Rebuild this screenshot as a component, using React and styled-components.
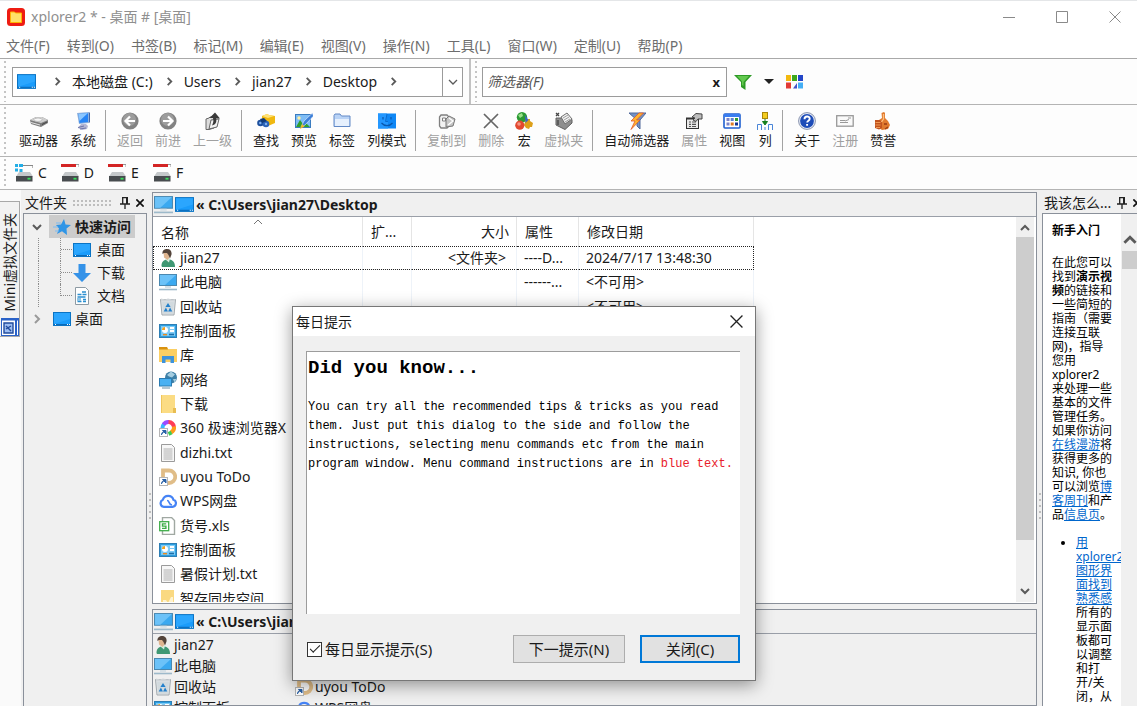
import React from "react";
import styled, { createGlobalStyle, css } from "styled-components";

const Global = createGlobalStyle`
  *, *::before, *::after { box-sizing: border-box; }
  html, body, #root { height: 100%; }
  body {
    margin: 0;
    overflow: hidden;
    background: #f0f0f0;
    color: #1a1a1a;
    font-family: "Noto Sans", "Noto Sans CJK SC", sans-serif;
    font-size: 14px;
    line-height: 20px;
  }
  button, input {
    font: inherit;
    color: inherit;
    margin: 0;
    padding: 0;
    border: 0;
    border-radius: 0;
    background: none;
  }
  svg { display: block; flex: none; }
`;

/* ---------- icons ---------- */

const Svg = ({ size = 18, children }) => (
  <svg width={size} height={size} viewBox="0 0 18 18" aria-hidden="true">{children}</svg>
);

const art = {
  desktop: (
    <>
      <rect x="0.5" y="2.5" width="17" height="13" fill="#1a9cfb" stroke="#0b74c4" />
      <path d="M1 3h16v6L1 14z" fill="#33abff" opacity=".7" />
      <path d="M1 14.5h16" stroke="#0a6ab8" />
      <path d="M2 14.5h1M14 14.5h1M16 14.5h1" stroke="#fff" />
    </>
  ),
  pc: (
    <>
      <rect x="0.5" y="1.5" width="17" height="11" fill="#3ba9f0" stroke="#4a88b0" />
      <path d="M1 2h16L6 12H1z" fill="#6cc2f8" />
      <path d="M6 13h6v2H6z" fill="#d6e0e6" />
      <path d="M0 16.500h18" stroke="#9db9ca" strokeWidth="1.6" />
    </>
  ),
  user: (
    <>
      <path d="M2.500 17c0-4 2-6 5-6.500h3c3.500.5 5.500 3 5.500 7.500H5c-1.500 0-2.500 0-2.500-1z" fill="#3f9873" />
      <path d="M6.500 10.500l3.500 3 1-4-2-1z" fill="#d8ecdf" />
      <path d="M4.500 3h6v5.500L8.500 11 5 8.500z" fill="#dfb58f" />
      <path d="M3.500 5C3 1.500 5.500 0 8 0c3.500 0 5 2.500 4.500 5.500L11 9.500 9.500 6 8 4H5z" fill="#54443a" />
    </>
  ),
  bin: (
    <>
      <path d="M1.500 1.500h15l-1.500 15.500H3z" fill="#e3e7ea" stroke="#a2a9ae" />
      <path d="M2 0.500l4 1 3-1 4 1 3-.5v2.500H2z" fill="#d0d5d9" />
      <path d="M3 4h12l-1 12H4z" fill="#d2dade" />
      <path d="M9 5l2.600 4H6.400zM4.700 13.500l2.200-4 2 4zM13.300 13.500l-2.200-4-2 4z" fill="#2480cc" />
    </>
  ),
  control: (
    <>
      <rect x="0.500" y="2.500" width="17" height="13" fill="#7ecaf5" stroke="#2e7fb5" />
      <rect x="1.500" y="3.500" width="15" height="11" fill="none" stroke="#2c9ee0" />
      <circle cx="6" cy="8" r="3" fill="#fff" />
      <path d="M6 8V5a3 3 0 0 0-3 3z" fill="#f0a020" />
      <path d="M11 6h4M11 9h4" stroke="#fff" strokeWidth="1.800" />
      <path d="M4 12.700h4" stroke="#e98a1c" strokeWidth="1.400" />
      <path d="M10 12.500h5" stroke="#1d6ea8" strokeWidth="1.600" />
    </>
  ),
  library: (
    <>
      <path d="M0 1h8l1 2h9v13H0z" fill="#fbcf63" />
      <path d="M0 1h8l1 2.500H0z" fill="#d9920f" />
      <path d="M3 17v-7h12v7h-3.500v-3.500h-5V17z" fill="#3d93dc" />
    </>
  ),
  network: (
    <>
      <circle cx="12" cy="6.500" r="6" fill="#3d7fa6" />
      <path d="M8 4l4-3.500 4 3-3 3-3-1zM14 8l3.500 0-2 3.500z" fill="#a5cde0" />
      <rect x="0.500" y="7.500" width="12" height="7.500" fill="#49b1f2" stroke="#2b7cb2" />
      <path d="M3 17h8" stroke="#9ab4c3" strokeWidth="1.500" />
    </>
  ),
  folder: (
    <>
      <path d="M2 0h14v18H2z" fill="#fbdc84" />
      <path d="M14 13h3v5h-3z" fill="#e8bd52" />
      <path d="M2.500 0v18" stroke="#efc65c" />
    </>
  ),
  folderNote: (
    <>
      <path d="M2 0h13v18H2z" fill="#fad981" />
      <path d="M4 10h3l2 3 3-6h2v11H4z" fill="#fff3cf" />
    </>
  ),
  browser: (
    <>
      <path d="M3.500 9a5.500 5.500 0 0 1 1.500-4" fill="none" stroke="#35b8ff" strokeWidth="4" />
      <path d="M4.500 5.500A6 6 0 0 1 10 3" fill="none" stroke="#9a4cff" strokeWidth="4" />
      <path d="M9.500 3a6 6 0 0 1 5.500 5" fill="none" stroke="#ff3d57" strokeWidth="4" />
      <path d="M15 7.500a6 6 0 0 1-3 6" fill="none" stroke="#ff9b1a" strokeWidth="4" />
      <path d="M12.500 13.500l-3 1.500" fill="none" stroke="#3ecb53" strokeWidth="4" />
    </>
  ),
  todo: <path d="M4 2.500h6a6 6 0 0 1 0 12.500H4z" fill="#fff" stroke="#e0bd88" strokeWidth="3.800" />,
  text: (
    <>
      <path d="M2.500 0.500h10l3 3v14h-13z" fill="#f7f7f7" stroke="#9b9b9b" />
      <path d="M4.500 5h9M4.500 7h9M4.500 9h9M4.500 11h9M4.500 13h9M4.500 15h9" stroke="#b0b0b0" />
    </>
  ),
  cloud: (
    <>
      <path d="M5 14.800h8.500a3.600 3.600 0 0 0 1-7A5.600 5.600 0 0 0 3.800 7.800 3.700 3.700 0 0 0 4.500 14.800z" fill="none" stroke="#4583f5" strokeWidth="2.200" />
      <path d="M8 8.500c3 0 1 4 5 4.500" fill="none" stroke="#4583f5" strokeWidth="1.600" />
    </>
  ),
  sheet: (
    <>
      <path d="M3.500 0.500h9l3 3v14h-12z" fill="#fff" stroke="#a0a8a2" strokeWidth="1.400" />
      <rect x="0.700" y="4.700" width="9" height="9" fill="#fff" stroke="#3fae49" strokeWidth="1.300" />
      <path d="M7.200 6.900H3.500v2.200H6.900v2.300H3" fill="none" stroke="#3fae49" strokeWidth="1.400" />
    </>
  ),
  star: (
    <>
      <path d="M11 1l1.500 5.500 5.500.5-4.500 3.500L14 17l-5-3.800L4 16l2-5.500L3 7l5-.5z" fill="#2f95e6" />
      <path d="M3 5h5M0 9h5M2 13h4" stroke="#7cbcf2" />
    </>
  ),
  down: <path d="M5.500 0h7v9H18l-9 9-9-9h5.500z" fill="#3492e8" />,
  docs: (
    <>
      <path d="M2.500 0.500h10l3 3v14h-13z" fill="#fff" stroke="#8d9aa3" />
      <path d="M9 5h4M4.500 7.500h4M9.500 7.500h4M4.500 10h8M4.500 14.500h4M10 12.500h3M10 14.500h3" stroke="#2b8fd0" strokeWidth="1.300" />
      <path d="M4 11h4v3H4z" fill="#8fc4e6" />
    </>
  ),
  drive: (
    <>
      <path d="M0 8l6-3 6 0 6 3v3l-7 4L1 12z" fill="#7d7d7d" />
      <path d="M0 8l6-3h6l6 3-7 3z" fill="#cfcfcf" />
      <ellipse cx="8" cy="7.700" rx="4" ry="1.700" fill="#f6f6f6" stroke="#a5a5a5" strokeWidth=".6" />
      <path d="M1 10.500l9 2.500" stroke="#e2e2e2" />
      <path d="M12 12.500l5-2.500" stroke="#444" />
    </>
  ),
  system: (
    <>
      <path d="M3 1l12-1v11l-10 1z" fill="#8fb0dc" />
      <path d="M4.500 2l9.500-1v9l-8.500 1z" fill="#2684f5" />
      <path d="M4.500 2l9.500-1-8.500 8z" fill="#8ac6ff" />
      <path d="M15 0l1 1v9l-1 1z" fill="#4367a8" />
      <path d="M7 12h5l2 2-1 3-5 1-4-2z" fill="#b3b6d4" />
      <path d="M4 15.500l6-1.500M6 17l6-1" stroke="#6d74a8" />
    </>
  ),
  back: (
    <>
      <circle cx="9" cy="9" r="8.600" fill="#828282" />
      <circle cx="8.500" cy="7.500" r="6.500" fill="#9c9c9c" />
      <path d="M14 9H5M9 4.500L4.500 9 9 13.500" fill="none" stroke="#fff" strokeWidth="2.200" />
    </>
  ),
  forward: (
    <>
      <circle cx="9" cy="9" r="8.600" fill="#828282" />
      <circle cx="8.500" cy="7.500" r="6.500" fill="#9c9c9c" />
      <path d="M4 9h9M9 4.500L13.500 9 9 13.500" fill="none" stroke="#fff" strokeWidth="2.200" />
    </>
  ),
  up: (
    <>
      <path d="M2 7l3-1 1-1h4v11l-5 1.500H2z" fill="#dcdcdc" stroke="#666" />
      <path d="M5 17l2-9 8-1-2 8z" fill="#f3f3f3" stroke="#666" />
      <path d="M8 13.500c4-1 5-4 4-7h4L11 .5 5.500 6H9c1 3 0 5-1 7.500z" fill="#3a3a3a" />
    </>
  ),
  find: (
    <>
      <path d="M5 4l5-2 2 1 6 1v7l-7 3-6-3z" fill="#f0b810" />
      <path d="M5 4l5-2 2 1 5 1-6 2z" fill="#ffe277" />
      <circle cx="3.500" cy="11" r="3.300" fill="#1d4f9c" />
      <circle cx="9" cy="12" r="3.300" fill="#2b62b5" />
      <path d="M3 7l4-1 3 3-5 2z" fill="#123a75" />
      <circle cx="3.300" cy="11" r="1.200" fill="#7fb1ee" />
      <circle cx="9" cy="12" r="1.200" fill="#7fb1ee" />
    </>
  ),
  preview: (
    <>
      <rect x="0.500" y="2.500" width="15" height="13" fill="#7dbcf5" stroke="#3a7cc0" />
      <path d="M1 15l4-7 3 4 2-2 5 5z" fill="#2fa02c" />
      <circle cx="4" cy="6" r="1.700" fill="#fff0a0" />
      <path d="M17.500 1L9 9l-3 6 4-2 8.500-9z" fill="#3c7fd8" stroke="#e8eefc" strokeWidth=".6" />
      <path d="M5 17l2-5 2.500 2.500z" fill="#f0b428" />
    </>
  ),
  tabFolder: (
    <>
      <path d="M1 14.500V3.500L2 2h5l1.500 2H17v10.500z" fill="#b9d3f6" stroke="#6289c6" />
      <path d="M2 7h14v7H2z" fill="#e6f0fd" />
    </>
  ),
  face: (
    <>
      <rect x="0" y="1.500" width="18" height="15" fill="#0f87f5" />
      <path d="M0 1.500h9L8 10h2v6.500H0z" fill="#2397ff" />
      <path d="M5 5v2.500M13 5v2.500M3.500 11c3 3.500 8 3.500 11 0" stroke="#0a57ac" strokeWidth="1.200" fill="none" />
      <path d="M9 2L7.500 9.500H10" stroke="#0a6cd0" fill="none" />
    </>
  ),
  copy: (
    <>
      <path d="M1.500 5l1.500-2h6l2 2v9l-2 2H3l-1.500-2z" fill="#f2f2f2" stroke="#808080" strokeWidth="1.300" />
      <path d="M4.500 6h3v3h-3z" fill="#fff" stroke="#808080" />
      <path d="M8 7l3-3 6 3-2 7-7 1z" fill="#c6c6c6" stroke="#777" />
      <path d="M11 6l4 3-5 4" fill="none" stroke="#fff" strokeWidth="1.300" />
    </>
  ),
  cross: <path d="M2 2l14 14M16 2L2 16" stroke="#666" strokeWidth="1.700" />,
  macro: (
    <>
      <circle cx="7" cy="5.200" r="5.200" fill="#2b9a33" />
      <path d="M3 3l4-2 1 3-3 2z" fill="#9be08a" />
      <path d="M11 7l4 0 0 2 3 2-1 4-2 0-1 2-3-1-2-3z" fill="#dda01a" />
      <path d="M10 3l3.500 5-3 3z" fill="#3d66c4" />
      <circle cx="4.800" cy="13.200" r="4.600" fill="#e2492f" />
      <circle cx="4" cy="12" r="1.800" fill="#f59384" />
    </>
  ),
  virtual: (
    <>
      <path d="M1 6l5 0 11 1.500 0 3.500-7 6.500L1 13z" fill="#8f8f8f" stroke="#606060" />
      <path d="M6 5l6-4 5 6-7 5z" fill="#f0f0f0" stroke="#707070" />
      <path d="M8 6l5-3M9 8l5-3M10 10l5-3" stroke="#a0a0a0" />
      <path d="M1 4l3-3M4 4L1 1M3 8v5" stroke="#444" strokeWidth="1.300" />
    </>
  ),
  autoFilter: (
    <>
      <path d="M1 1h17l-6 7v9l-3-3V8z" fill="#7392c4" stroke="#50689a" />
      <path d="M11 1L3 9h4l-4 8.500L12 8H8.500l7-7z" fill="#ffb62e" stroke="#e2552b" strokeWidth=".8" />
    </>
  ),
  props: (
    <>
      <rect x="1.500" y="6.500" width="12" height="10" fill="#e9e9e9" stroke="#333" />
      <path d="M1 6.500h10" stroke="#333" strokeWidth="2" />
      <path d="M4 10h2M7 10h4M4 12.300h2M7 12.300h4M4 14.500h2M7 14.500h4" stroke="#555" strokeWidth="1.200" />
      <path d="M7 5l4-3.500 6 .5v5h-4l-2 2.500-3-1.500 2-2z" fill="#bdbdbd" stroke="#444" />
    </>
  ),
  view: (
    <>
      <rect x="1" y="2" width="16" height="14" rx="1" fill="#fff" stroke="#1f5fd0" strokeWidth="1.600" />
      <path d="M1 3.500h16" stroke="#3a7df0" strokeWidth="3" />
      <path d="M3.500 7.500h3M3.500 12h3" stroke="#7b83c8" strokeWidth="3" />
      <path d="M7.700 7.500h3" stroke="#5b7fd0" strokeWidth="3" />
      <path d="M7.700 12h3" stroke="#dd7a22" strokeWidth="3" />
      <path d="M12 7.500h3" stroke="#2e9a35" strokeWidth="3" />
      <path d="M12 12h3" stroke="#15358f" strokeWidth="3" />
    </>
  ),
  columns: (
    <>
      <rect x="6.500" y="0.500" width="5" height="6" fill="#f3cc1f" stroke="#a98709" />
      <path d="M9 7v4M6.500 9.500L9 13l2.500-3.500z" stroke="#16801c" fill="#16801c" />
      <path d="M1.500 18v-5.500h4V18M9 18v-3M12.500 18v-5.500h4V18" stroke="#4a86d8" fill="none" />
    </>
  ),
  help: (
    <>
      <circle cx="9" cy="9" r="8.400" fill="#e9eef8" stroke="#8792ad" />
      <circle cx="9" cy="9" r="6.900" fill="#1d4cb8" />
      <path d="M6.500 7.200c0-3.600 5.200-3.400 5.200-.4 0 1.900-2.500 1.900-2.500 3.700M9.100 12v1.800" fill="none" stroke="#fff" strokeWidth="1.900" />
    </>
  ),
  card: (
    <>
      <rect x="0.700" y="3.700" width="16.500" height="10.500" fill="#fafafa" stroke="#999" strokeWidth="1.300" />
      <path d="M4 8.500h5M4 10.500h8M9 9l4-1.500M12 6h3" stroke="#999" />
    </>
  ),
  thumb: (
    <>
      <path d="M7.500 1L10 0l1 1v5l3 3 2 4-2 4-6 1-3-2V8l3-2z" fill="#e07a2e" />
      <path d="M1 8h5l2 2v6l-3 1.500L1 16z" fill="#c2541f" />
      <path d="M1.500 10.500h5M1.500 13h5M2 15.500h4" stroke="#f09a55" strokeWidth="1.200" />
      <path d="M9.500 2v5l-2 3" stroke="#ffbf80" fill="none" strokeWidth="1.300" />
      <path d="M10 12h3M14 15l-3 2" stroke="#9b3d14" fill="none" strokeWidth="1.300" />
    </>
  ),
  funnel: (
    <>
      <path d="M0 2h18l-6.500 7v8L7 14V9z" fill="#2e9b26" />
      <path d="M3 3h12L9.500 9v4L8 12V8.500z" fill="#63c94f" />
    </>
  ),
  palette: (
    <>
      <path d="M0 2h5v6H0z" fill="#f3b90f" />
      <path d="M6 2h5v6H6z" fill="#3ea91c" />
      <path d="M12 2h5v6h-5z" fill="#2446c8" />
      <path d="M0 9.500h5v6H0z" fill="#e23b35" />
      <path d="M11 10v5.500H7z" fill="#4554c9" />
      <path d="M12 9.500h5v6h-5z" fill="#43aef5" />
    </>
  ),
  diskC: (
    <>
      <path d="M8 1.500h10V4" fill="none" stroke="#888" strokeWidth="1.200" />
      <path d="M0 0h3v3H0zM4 0h4v3H4zM0 4.500h3v3H0zM4.500 5h3v3h-3z" fill="#23aee6" />
      <path d="M4 8h11l3 4.500H1z" fill="#c4c8ca" />
      <rect x="1" y="12" width="16.500" height="5.500" fill="#484c4f" />
      <path d="M12.500 14.700h3" stroke="#37e05a" strokeWidth="1.800" />
    </>
  ),
  disk: (
    <>
      <path d="M0 1.500h15" stroke="#d32424" strokeWidth="3" />
      <path d="M15 .500h3V3" fill="none" stroke="#999" />
      <path d="M4 8h11l3 4.500H1z" fill="#c4c8ca" />
      <rect x="1" y="12" width="16.500" height="5.500" fill="#484c4f" />
      <path d="M12.500 14.700h3" stroke="#37e05a" strokeWidth="1.800" />
    </>
  ),
  app: (
    <>
      <rect width="18" height="18" rx="3.500" fill="#ee1c12" />
      <path d="M3.500 4h4l1 1h6v9.500h-11z" fill="#ffe169" stroke="#ffb400" />
    </>
  ),
  mini: (
    <>
      <rect x="0.500" y="0.500" width="17" height="17" fill="#fff" stroke="#2a62c8" />
      <path d="M1 1.500h16M15 1v16" stroke="#2a62c8" strokeWidth="2" />
      <path d="M3 5h9v10H3z" fill="#9dbdf2" stroke="#214b9c" strokeWidth="1.400" />
      <path d="M5 8l5 5M10 8l-5 3" stroke="#214b9c" strokeWidth="1.400" />
    </>
  ),
};

const shortcut = (
  <>
    <rect x="0.500" y="9.500" width="8" height="8" fill="#fff" stroke="#b5b5b5" />
    <path d="M2.500 16c0-2 1-3.500 3-3.500M3.500 11.500h3.500V15z" fill="#2a62a8" stroke="#2a62a8" />
  </>
);

const Icon = ({ name, size, link }) => (
  <Svg size={size}>
    {art[name]}
    {link && shortcut}
  </Svg>
);

const Chevron = ({ dir = "right", size = 10, color = "#5a5a5a", weight = 2 }) => {
  const d = { right: "M3 1l4 4-4 4", down: "M1 3l4 4 4-4", up: "M1 7l4-4 4 4" }[dir];
  return (
    <svg width={size} height={size} viewBox="0 0 10 10" aria-hidden="true">
      <path d={d} fill="none" stroke={color} strokeWidth={weight} />
    </svg>
  );
};

const CloseMark = ({ size = 12, color = "#8a8a8a", weight = 1 }) => (
  <svg width={size} height={size} viewBox="0 0 12 12" aria-hidden="true">
    <path d="M.5.5l11 11M11.500.5l-11 11" stroke={color} strokeWidth={weight} />
  </svg>
);

const PinMark = () => (
  <svg width="12" height="12" viewBox="0 0 12 12" aria-hidden="true">
    <path d="M3 .7h6M3.700 1v6M1 7h10M6 7v5" stroke="#222" strokeWidth="1.300" />
    <path d="M8 1v6" stroke="#222" strokeWidth="2" />
  </svg>
);

/* ---------- window frame ---------- */

const Window = styled.div`
  height: 100vh;
  display: flex;
  flex-direction: column;
  overflow: hidden;
`;

const TitleBar = styled.header`
  display: flex;
  align-items: center;
  height: 33px;
  flex: none;
  padding-left: 7px;
  gap: 6px;
  background: #fff;
  border-top: 1px solid #e4e6e8;
  color: #8f8f8f;
`;

const WindowTitle = styled.h1`
  flex: 1;
  margin: 0;
  font-size: 14px;
  font-weight: 400;
`;

const WindowButtons = styled.div`
  display: flex;
  gap: 9px;
`;

const WindowButton = styled.button`
  width: 44px;
  height: 30px;
  display: grid;
  place-items: center;
`;

const MenuBar = styled.nav`
  display: flex;
  align-items: center;
  gap: 17px;
  height: 26px;
  flex: none;
  padding-left: 6px;
  background: #fff;
  border-bottom: 1px solid #a9a9a9;
  color: #6d6d6d;
  white-space: nowrap;
`;

const Band = styled.div`
  display: flex;
  align-items: center;
  height: ${(p) => p.$height};
  flex: none;
  background: #fdfdfd;
  border-bottom: 1px solid #b4b4b4;
`;

const Grip = styled.div`
  width: 2px;
  align-self: stretch;
  flex: none;
  margin: 2px 0 2px 4px;
  background: repeating-linear-gradient(#c4c4c4 0 2px, transparent 2px 5px);
`;

const AddressGroup = styled.div`
  display: flex;
  align-items: center;
  width: 471px;
  align-self: stretch;
  padding-right: 6px;
  border-right: 2px solid #c2c2c2;
`;

const AddressBox = styled.div`
  display: flex;
  align-items: center;
  flex: 1;
  height: 30px;
  margin-left: 6px;
  padding-left: 4px;
  background: #fff;
  border: 1px solid #9b9b9b;
`;

const Crumbs = styled.nav`
  display: flex;
  align-items: center;
  gap: 10px;
  flex: 1;
  white-space: nowrap;
  & > svg { margin-left: 2px; }
  & > svg:first-child { margin: 0 5px 0 0; }
`;

const DropButton = styled.button`
  width: 20px;
  align-self: stretch;
  display: grid;
  place-items: center;
  border-left: 1px solid #9b9b9b;
`;

const FilterBox = styled.div`
  display: flex;
  align-items: center;
  width: 245px;
  height: 30px;
  margin: 0 7px 0 5px;
  padding: 0 6px 0 4px;
  background: #fff;
  border: 1px solid #9b9b9b;
`;

const FilterInput = styled.input`
  flex: 1;
  min-width: 0;
  outline: 0;
  font-style: italic;
  &::placeholder { color: #555; opacity: 1; }
`;

const ClearButton = styled.button`
  font-size: 13px;
  font-weight: 700;
  line-height: 16px;
`;

const FlatButton = styled.button`
  display: flex;
  align-items: center;
`;

const FilterTools = styled.div`
  display: flex;
  align-items: center;
  gap: 12px;
`;

const ToolRow = styled.div`
  display: flex;
  align-items: center;
  padding-left: 7px;
`;

const ToolButton = styled.button`
  display: flex;
  flex-direction: column;
  align-items: center;
  gap: 1px;
  min-width: 28px;
  padding: 0 6px;
  font-size: 13px;
  line-height: 18px;
  white-space: nowrap;
  color: #1a1a1a;
  &:disabled { color: #a0a0a0; }
`;

const ToolIcon = styled.span`
  display: flex;
  justify-content: center;
  width: 16px;
`;

const ToolRule = styled.span`
  width: 1px;
  height: 41px;
  margin: 0 5px 0 3px;
  background: #a3a3a3;
`;

const Drives = styled.div`
  display: flex;
  gap: 14px;
  margin-left: 9px;
`;

const DriveButton = styled.button`
  display: flex;
  align-items: center;
  gap: 5px;
`;

/* ---------- workspace ---------- */

const Workspace = styled.main`
  flex: 1;
  min-height: 0;
  display: grid;
  grid-template-columns: 21px 126px 5px minmax(0, 1fr) 5px 95px;
  grid-template-rows: minmax(0, 1fr);
`;

const SideStrip = styled.aside`
  background: #fafafa;
  padding-top: 11px;
`;

const SideTab = styled.button`
  display: flex;
  flex-direction: column;
  justify-content: flex-end;
  align-items: center;
  gap: 6px;
  width: 20px;
  height: 136px;
  border: 1px solid #a8a8a8;
  border-left: 0;
  background: #f2f2f2;
`;

const SideLabel = styled.span`
  writing-mode: vertical-rl;
  text-orientation: sideways;
  transform: rotate(180deg);
  white-space: nowrap;
  line-height: 18px;
`;

const Dock = styled.section`
  display: flex;
  flex-direction: column;
  min-width: 0;
  min-height: 0;
  padding-left: ${(p) => p.$inset || "0"};
  overflow: hidden;
`;

const DockHead = styled.div`
  display: flex;
  align-items: center;
  gap: 5px;
  height: 23px;
  flex: none;
  padding: 3px 3px 0 2px;
  white-space: nowrap;
`;

const DockTitle = styled.h2`
  margin: 0;
  font-size: 14px;
  font-weight: 400;
`;

const DockDots = styled.span`
  flex: 1;
  height: 8px;
  margin-right: 2px;
  background: radial-gradient(circle, #bdbdbd 1px, transparent 1px) 0 0 / 4px 4px;
`;

const Splitter = styled.div`
  display: flex;
  align-items: flex-start;
  justify-content: center;
  padding-top: 303px;
  &::before {
    content: "";
    width: 2px;
    height: 26px;
    background: repeating-linear-gradient(#bdbdbd 0 2px, transparent 2px 6px);
  }
`;

const Tree = styled.ul`
  flex: 1;
  margin: 0;
  padding: 1px 0 0;
  list-style: none;
  border: 1px solid #8a909a;
  border-bottom: 0;
`;

const TreeRow = styled.li`
  display: flex;
  align-items: center;
  height: 23px;
`;

const Toggle = styled.button`
  width: 25px;
  display: grid;
  place-items: center;
`;

const TreeLabel = styled.span`
  display: flex;
  align-items: center;
  gap: ${(p) => (p.$child ? "6px" : "4px")};
  height: 23px;
  padding: 0 4px 0 ${(p) => (p.$child ? "1px" : "4px")};
  white-space: nowrap;
  ${(p) => p.$selected && css`
    background: #cccccc;
    font-weight: 700;
  `}
`;

const Guide = styled.span`
  width: ${(p) => p.$width};
  height: ${(p) => (p.$end ? "50%" : "100%")};
  align-self: flex-start;
  border-right: 1px dotted #8c8c8c;
`;

const Dash = styled.span`
  width: 11px;
  border-bottom: 1px dotted #8c8c8c;
`;

const Center = styled.div`
  display: grid;
  grid-template-rows: minmax(0, 1fr) 97px;
  gap: 5px;
  padding-top: 2px;
  min-height: 0;
`;

const Pane = styled.section`
  display: flex;
  flex-direction: column;
  min-height: 0;
  border: 1px solid #8a909a;
  background: ${(p) => (p.$active ? "#fff" : "#f0f0f0")};
  overflow: hidden;
`;

const PaneHead = styled.header`
  display: flex;
  align-items: center;
  gap: 2px;
  height: 24px;
  flex: none;
  padding-left: 1px;
  background: #f0f0f0;
  border-bottom: 1px solid #9a9fa8;
  white-space: nowrap;
`;

const PanePath = styled.h2`
  margin: 0;
  font-size: 14px;
  font-weight: 700;
`;

const PaneBody = styled.div`
  flex: 1;
  min-height: 0;
  display: flex;
  padding: 0 2px 1px 0;
`;

const ListView = styled.div`
  flex: 1;
  min-width: 0;
  overflow: hidden;
`;

const FileTable = styled.table`
  width: 601px;
  table-layout: fixed;
  border-collapse: separate;
  border-spacing: 0;
  white-space: nowrap;
`;

const HeadCell = styled.th`
  height: 29px;
  padding: 0 7px 0 8px;
  border-right: 1px solid #e5e5e5;
  font-weight: 400;
  text-align: ${(p) => (p.$right ? "right" : "left")};
`;

const SortHead = styled.span`
  display: flex;
  flex-direction: column;
  & > svg {
    align-self: center;
    margin: -4px 0 -4px 0;
  }
`;

const Row = styled.tr`
  height: 24px;
  &:nth-child(3n) { height: 25px; }
`;

const focusEdge = css`
  border-top: 1px dotted #222;
  border-bottom: 1px dotted #222;
  &:first-child { border-left: 1px dotted #222; }
  &:last-child { border-right: 1px dotted #222; }
`;

const Cell = styled.td`
  padding: 0 ${(p) => (p.$right ? "10px" : "0")} 0 ${(p) => (p.$name ? "5px" : "7px")};
  border-right: 1px solid #eef3f9;
  text-align: ${(p) => (p.$right ? "right" : "left")};
  line-height: 20px;
  &:first-child { border-left: 1px solid transparent; }
  ${(p) => p.$focus && focusEdge}
`;

const FileName = styled.span`
  display: flex;
  align-items: center;
  gap: 3px;
`;

const ScrollTrack = styled.div`
  display: flex;
  flex-direction: column;
  align-items: center;
  width: ${(p) => p.$width};
  flex: none;
  padding: ${(p) => p.$pad};
  gap: 4px;
  background: #f0f0f0;
`;

const ScrollThumb = styled.div`
  align-self: stretch;
  flex: 0 0 ${(p) => p.$length};
  margin-bottom: auto;
  background: #cdcdcd;
`;

const CompactList = styled.ul`
  display: grid;
  grid-template-columns: 141px 141px;
  grid-auto-rows: 21px;
  margin: 0;
  padding: 0 0 0 1px;
  list-style: none;
`;

const CompactItem = styled.li`
  display: flex;
  align-items: center;
  gap: 2px;
  grid-column: ${(p) => p.$column};
  grid-row: ${(p) => p.$row};
  white-space: nowrap;
`;

/* ---------- help dock ---------- */

const HelpFrame = styled.div`
  flex: 1;
  min-height: 0;
  display: flex;
  background: #fff;
  border-top: 1px solid #8a909a;
  border-left: 1px solid #8a909a;
`;

const HelpText = styled.article`
  flex: 1;
  min-width: 0;
  overflow: hidden;
  padding: 10px 0 0 9px;
  font-size: 12px;
  line-height: 14px;
  color: #000;
  white-space: nowrap;
  h3 { margin: 0 0 18px; font-size: 12px; }
  p { margin: 0 0 14px; }
  ul { margin: 0; padding-left: 24px; }
  a { color: #0066cc; text-decoration: underline; }
`;

/* ---------- tip dialog ---------- */

const Dialog = styled.section`
  position: absolute;
  left: 292px;
  top: 306px;
  width: 464px;
  background: #f0f0f0;
  border: 1px solid #777;
  box-shadow: 0 4px 16px rgba(0, 0, 0, 0.4);
`;

const DialogHead = styled.header`
  display: flex;
  align-items: center;
  justify-content: space-between;
  height: 29px;
  padding: 0 12px 0 3px;
  background: #fff;
`;

const DialogTitle = styled.h2`
  margin: 0;
  font-size: 14px;
  font-weight: 400;
`;

const TipBox = styled.div`
  height: 263px;
  margin: 15px 15px 0 13px;
  padding: 4px 0 0 1px;
  background: #fff;
  border-top: 1px solid #9c9c9c;
  border-left: 1px solid #9c9c9c;
  color: #000;
  font: 12px/19px "Liberation Mono", monospace;
  white-space: nowrap;
  h3 { margin: 0 0 18px; font-size: 19px; line-height: 24px; }
  p { margin: 0; }
  em { font-style: normal; color: #e8202c; }
`;

const DialogFoot = styled.footer`
  display: flex;
  align-items: center;
  gap: 15px;
  padding: 21px 15px 17px 14px;
  font-size: 15px;
`;

const CheckLabel = styled.label`
  display: flex;
  align-items: center;
  gap: 3px;
  margin-right: auto;
`;

const CheckBox = styled.input`
  appearance: none;
  width: 15px;
  height: 15px;
  border: 1px solid #333;
  background: #fff;
  display: grid;
  place-items: center;
  &:checked::before {
    content: "";
    width: 10px;
    height: 5px;
    margin-bottom: 3px;
    border-left: 1px solid #222;
    border-bottom: 1px solid #222;
    transform: rotate(-45deg);
  }
`;

const DialogButton = styled.button`
  width: ${(p) => (p.$primary ? "100px" : "112px")};
  height: 28px;
  background: #e1e1e1;
  border: ${(p) => (p.$primary ? "2px solid #0078d7" : "1px solid #adadad")};
`;

/* ---------- data ---------- */

const menus = ["文件(F)", "转到(O)", "书签(B)", "标记(M)", "编辑(E)", "视图(V)", "操作(N)", "工具(L)", "窗口(W)", "定制(U)", "帮助(P)"];
const crumbs = ["本地磁盘 (C:)", "Users", "jian27", "Desktop"];

const tools = [
  [["驱动器", "drive"], ["系统", "system"]],
  [["返回", "back", true], ["前进", "forward", true], ["上一级", "up", true]],
  [["查找", "find"], ["预览", "preview"], ["标签", "tabFolder"], ["列模式", "face"]],
  [["复制到", "copy", true], ["删除", "cross", true], ["宏", "macro"], ["虚拟夹", "virtual", true]],
  [["自动筛选器", "autoFilter"], ["属性", "props", true], ["视图", "view"], ["列", "columns"]],
  [["关于", "help"], ["注册", "card", true], ["赞誉", "thumb"]],
];

const files = [
  { name: "jian27", icon: "user", size: "<文件夹>", attr: "----D...", date: "2024/7/17 13:48:30" },
  { name: "此电脑", icon: "pc", attr: "------...", date: "<不可用>" },
  { name: "回收站", icon: "bin", date: "<不可用>" },
  { name: "控制面板", icon: "control" },
  { name: "库", icon: "library" },
  { name: "网络", icon: "network" },
  { name: "下载", icon: "folder" },
  { name: "360 极速浏览器X", icon: "browser", link: true },
  { name: "dizhi.txt", icon: "text" },
  { name: "uyou ToDo", icon: "todo", link: true },
  { name: "WPS网盘", icon: "cloud" },
  { name: "货号.xls", icon: "sheet" },
  { name: "控制面板", icon: "control" },
  { name: "暑假计划.txt", icon: "text" },
  { name: "智存同步空间", icon: "folderNote" },
];

const compact = [
  { name: "jian27", icon: "user", column: 1, row: 1 },
  { name: "此电脑", icon: "pc", column: 1, row: 2 },
  { name: "回收站", icon: "bin", column: 1, row: 3 },
  { name: "控制面板", icon: "control", column: 1, row: 4 },
  { name: "uyou ToDo", icon: "todo", link: true, column: 2, row: 3 },
  { name: "WPS网盘", icon: "cloud", column: 2, row: 4 },
];

const treeChildren = [
  ["桌面", "desktop"],
  ["下载", "down"],
  ["文档", "docs"],
];

/* ---------- parts ---------- */

const PaneTitle = () => (
  <PaneHead>
    <Icon name="pc" size={19} />
    <Icon name="desktop" size={19} />
    <PanePath>« C:\Users\jian27\Desktop</PanePath>
  </PaneHead>
);

const DockButtons = () => (
  <>
    <FlatButton aria-label="固定"><PinMark /></FlatButton>
    <FlatButton aria-label="关闭"><CloseMark size={8} color="#111" weight={2.5} /></FlatButton>
  </>
);

const FolderDock = () => (
  <Dock $inset="2px">
    <DockHead>
      <DockTitle>文件夹</DockTitle>
      <DockDots />
      <DockButtons />
    </DockHead>
    <Tree>
      <TreeRow>
        <Toggle aria-label="折叠"><Chevron dir="down" /></Toggle>
        <TreeLabel $selected><Icon name="star" />快速访问</TreeLabel>
      </TreeRow>
      {treeChildren.map(([name, icon], i) => (
        <TreeRow key={name}>
          <Guide $width="15px" />
          <Guide $width="22px" $end={i === treeChildren.length - 1} />
          <Dash />
          <TreeLabel $child><Icon name={icon} />{name}</TreeLabel>
        </TreeRow>
      ))}
      <TreeRow>
        <Toggle aria-label="展开"><Chevron color="#9a9a9a" /></Toggle>
        <TreeLabel><Icon name="desktop" />桌面</TreeLabel>
      </TreeRow>
    </Tree>
  </Dock>
);

const FilePane = () => (
  <Pane $active>
    <PaneTitle />
    <PaneBody>
      <ListView>
        <FileTable>
          <colgroup>
            <col width="210" /><col width="49" /><col width="105" /><col width="62" /><col width="175" />
          </colgroup>
          <thead>
            <tr>
              <HeadCell>
                <SortHead><Chevron dir="up" weight={1} color="#777" />名称</SortHead>
              </HeadCell>
              <HeadCell>扩...</HeadCell>
              <HeadCell $right>大小</HeadCell>
              <HeadCell>属性</HeadCell>
              <HeadCell>修改日期</HeadCell>
            </tr>
          </thead>
          <tbody>
            {files.map((f, i) => (
              <Row key={i}>
                <Cell $name $focus={i === 0}>
                  <FileName><Icon name={f.icon} link={f.link} />{f.name}</FileName>
                </Cell>
                <Cell $focus={i === 0} />
                <Cell $right $focus={i === 0}>{f.size}</Cell>
                <Cell $focus={i === 0}>{f.attr}</Cell>
                <Cell $focus={i === 0}>{f.date}</Cell>
              </Row>
            ))}
          </tbody>
        </FileTable>
      </ListView>
      <ScrollTrack $width="18px" $pad="6px 0">
        <Chevron dir="up" />
        <ScrollThumb $length="303px" />
        <Chevron dir="down" />
      </ScrollTrack>
    </PaneBody>
  </Pane>
);

const HelpDock = () => (
  <Dock>
    <DockHead>
      <DockTitle>我该怎么...</DockTitle>
      <DockButtons />
    </DockHead>
    <HelpFrame>
      <HelpText>
        <h3>新手入门</h3>
        <p>
          在此您可以<br />找到<b>演示视</b><br /><b>频</b>的链接和<br />一些简短的<br />指南（需要<br />
          连接互联<br />网)，指导<br />您用<br />xplorer2<br />来处理一些<br />基本的文件<br />管理任务。<br />
          如果你访问<br /><a href="#tour">在线漫游</a>将<br />获得更多的<br />知识, 你也<br />
          可以浏览<a href="#blog">博<br />客周刊</a>和产<br />品<a href="#info">信息页</a>。
        </p>
        <ul>
          <li>
            <a href="#gui">用<br />xplorer2<br />图形界<br />面找到<br />熟悉感</a><br />
            所有的<br />显示面<br />板都可<br />以调整<br />和打<br />开/关<br />闭，从
          </li>
        </ul>
      </HelpText>
      <ScrollTrack $width="16px" $pad="19px 0 0 1px">
        <Chevron dir="up" size={14} />
        <ScrollThumb $length="18px" />
      </ScrollTrack>
    </HelpFrame>
  </Dock>
);

const TipDialog = () => (
  <Dialog role="dialog" aria-labelledby="tip-title">
    <DialogHead>
      <DialogTitle id="tip-title">每日提示</DialogTitle>
      <FlatButton aria-label="关闭"><CloseMark size={13} color="#222" weight={1.2} /></FlatButton>
    </DialogHead>
    <TipBox>
      <h3>Did you know...</h3>
      <p>
        You can try all the recommended tips &amp; tricks as you read<br />
        them. Just put this dialog to the side and follow the<br />
        instructions, selecting menu commands etc from the main<br />
        program window. Menu command instructions are in <em>blue text.</em>
      </p>
    </TipBox>
    <DialogFoot>
      <CheckLabel>
        <CheckBox type="checkbox" defaultChecked />
        每日显示提示(S)
      </CheckLabel>
      <DialogButton>下一提示(N)</DialogButton>
      <DialogButton $primary>关闭(C)</DialogButton>
    </DialogFoot>
  </Dialog>
);

const ToolSet = () => (
  <ToolRow>
    {tools.map((group, i) => (
      <React.Fragment key={i}>
        {i > 0 && <ToolRule />}
        {group.map(([label, icon, disabled]) => (
          <ToolButton key={label} disabled={disabled}>
            <ToolIcon><Icon name={icon} /></ToolIcon>
            {label}
          </ToolButton>
        ))}
      </React.Fragment>
    ))}
  </ToolRow>
);

export default function App() {
  return (
    <Window>
      <Global />
      <TitleBar>
        <Icon name="app" />
        <WindowTitle>xplorer2 * - 桌面 # [桌面]</WindowTitle>
        <WindowButtons>
          <WindowButton aria-label="最小化">
            <svg width="12" height="12" viewBox="0 0 12 12"><path d="M0 6.500h12" stroke="#8a8a8a" /></svg>
          </WindowButton>
          <WindowButton aria-label="最大化">
            <svg width="12" height="12" viewBox="0 0 12 12"><path d="M.5.500h11v11H.5z" fill="none" stroke="#8a8a8a" /></svg>
          </WindowButton>
          <WindowButton aria-label="关闭"><CloseMark /></WindowButton>
        </WindowButtons>
      </TitleBar>
      <MenuBar>
        {menus.map((m) => <FlatButton key={m}>{m}</FlatButton>)}
      </MenuBar>

      <Band $height="46px">
        <AddressGroup>
          <Grip />
          <AddressBox>
            <Crumbs aria-label="地址">
              <Icon name="desktop" size={19} />
              {crumbs.map((c) => (
                <React.Fragment key={c}>
                  <Chevron size={9} />
                  <FlatButton>{c}</FlatButton>
                </React.Fragment>
              ))}
              <Chevron size={9} />
            </Crumbs>
            <DropButton aria-label="历史"><Chevron dir="down" weight={1.3} /></DropButton>
          </AddressBox>
        </AddressGroup>
        <Grip />
        <FilterBox>
          <FilterInput type="text" aria-label="筛选器" placeholder="筛选器(F)" />
          <ClearButton aria-label="清除">x</ClearButton>
        </FilterBox>
        <FilterTools>
          <FlatButton aria-label="筛选"><Icon name="funnel" /></FlatButton>
          <FlatButton aria-label="筛选选项">
            <svg width="10" height="6" viewBox="0 0 10 6"><path d="M0 0h10L5 5z" fill="#222" /></svg>
          </FlatButton>
          <FlatButton aria-label="颜色"><Icon name="palette" /></FlatButton>
        </FilterTools>
      </Band>

      <Band $height="52px">
        <Grip />
        <ToolSet />
      </Band>

      <Band $height="33px">
        <Grip />
        <Drives>
          {["C", "D", "E", "F"].map((d) => (
            <DriveButton key={d}><Icon name={d === "C" ? "diskC" : "disk"} />{d}</DriveButton>
          ))}
        </Drives>
      </Band>

      <Workspace>
        <SideStrip>
          <SideTab><SideLabel>Mini虚拟文件夹</SideLabel><Icon name="mini" /></SideTab>
        </SideStrip>
        <FolderDock />
        <Splitter />
        <Center>
          <FilePane />
          <Pane>
            <PaneTitle />
            <CompactList>
              {compact.map((f) => (
                <CompactItem key={f.name} $column={f.column} $row={f.row}>
                  <Icon name={f.icon} link={f.link} />{f.name}
                </CompactItem>
              ))}
            </CompactList>
          </Pane>
        </Center>
        <Splitter />
        <HelpDock />
      </Workspace>

      <TipDialog />
    </Window>
  );
}
